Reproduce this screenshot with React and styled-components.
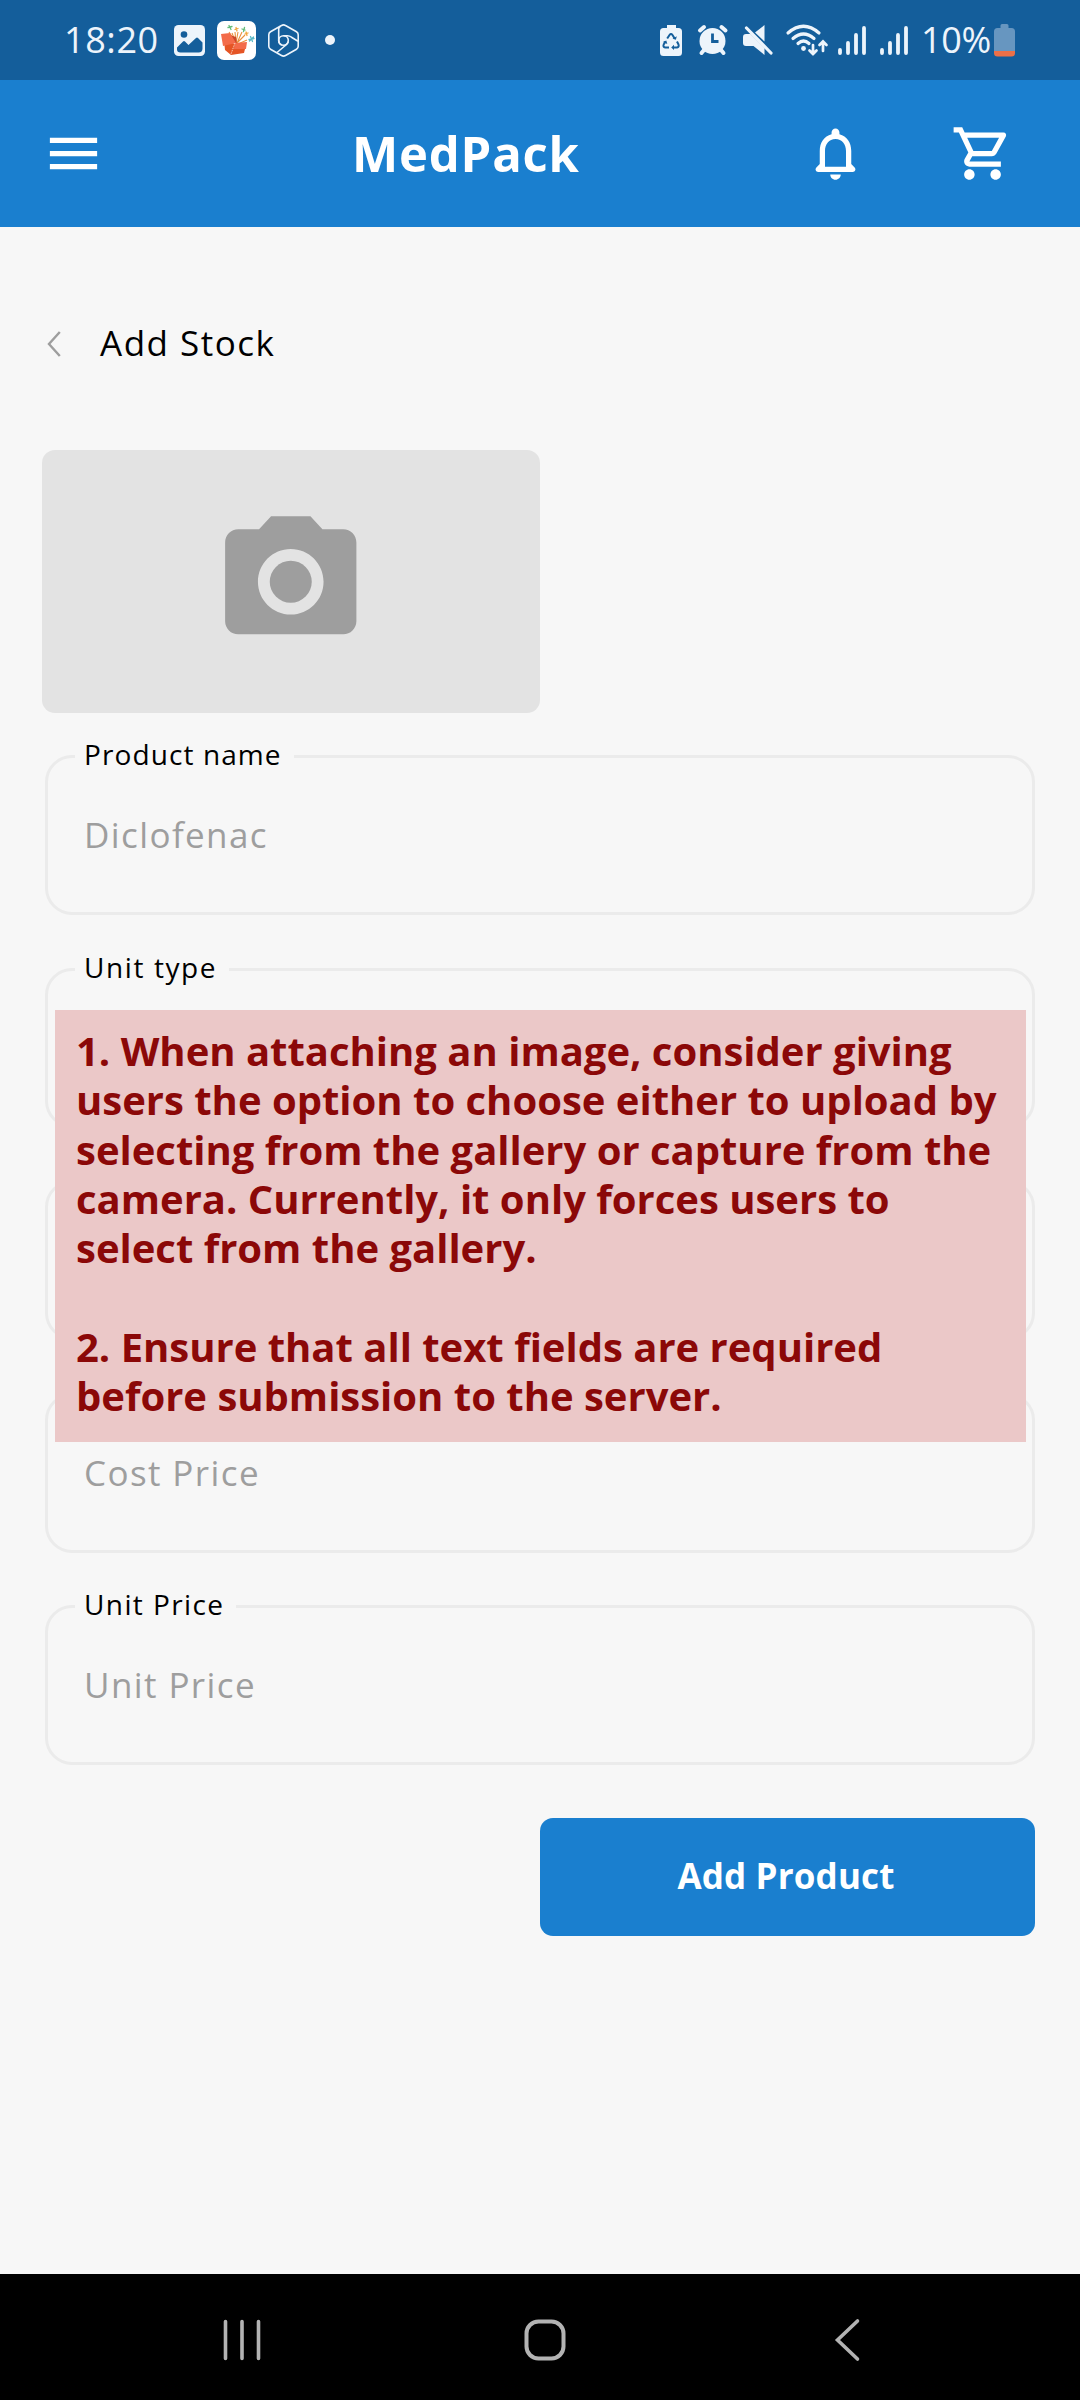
import React from "react";
import styled, { createGlobalStyle } from "styled-components";
import { MdMenu, MdOutlineShoppingCart, MdCameraAlt } from "react-icons/md";

const font = `"Open Sans", "Noto Sans", sans-serif`;

const Global = createGlobalStyle`
  * { box-sizing: border-box; }
  body { margin: 0; background: #f7f7f7; font-family: ${font}; }
  svg { display: block; flex: none; }
`;

const Screen = styled.div`
  position: relative;
  width: 1080px;
  height: 2400px;
  display: flex;
  flex-direction: column;
  background: #f7f7f7;
  overflow: hidden;
`;

const StatusBar = styled.header`
  height: 80px;
  flex: none;
  display: flex;
  justify-content: space-between;
  padding: 0 65px 0 64px;
  background: #145e9b;
  color: #edf4fb;
`;

const StatusGroup = styled.div`
  display: flex;
  align-items: center;
`;

const StatusText = styled.span`
  width: ${(p) => p.$width}px;
  font-size: 36px;
  line-height: 50px;
  letter-spacing: ${(p) => p.$spacing}px;
  white-space: nowrap;
  padding-bottom: 1px;
`;

const StatusIcon = styled.svg`
  margin-left: ${(p) => p.$gap || 0}px;
  overflow: visible;
`;

const AppBar = styled.nav`
  height: 147px;
  flex: none;
  display: flex;
  align-items: center;
  padding: 0 66px 0 42px;
  background: #1a7fcf;
  color: #fff;
`;

const Brand = styled.h1`
  margin: 0 0 0 247px;
  flex: 1;
  padding-bottom: 2px;
  font-size: 49px;
  font-weight: 700;
  line-height: 60px;
  letter-spacing: 0.8px;
`;

const Actions = styled.div`
  display: flex;
  gap: 84px;
`;

const Content = styled.main`
  flex: 1;
  display: flex;
  flex-direction: column;
  padding: 87px 45px 0 42px;
`;

const Heading = styled.div`
  height: 60px;
  display: flex;
  align-items: center;
  margin-bottom: 76px;
  padding-left: 5px;
`;

const PageTitle = styled.h2`
  margin: 0 0 2px 39px;
  font-size: 35px;
  font-weight: 400;
  line-height: 44px;
  letter-spacing: 1.5px;
  color: #000;
`;

const PhotoPicker = styled.div`
  width: 498px;
  height: 263px;
  flex: none;
  display: flex;
  align-items: center;
  justify-content: center;
  border-radius: 13px;
  background: #e3e3e3;
  color: #9e9e9e;
`;

const Form = styled.form`
  display: flex;
  flex-direction: column;
  gap: 38.5px;
  margin: 28px 0 0 3px;
`;

const Field = styled.fieldset`
  height: 174px;
  min-width: 0;
  margin: 0;
  padding: 0 27px;
  border: 3px solid #ebebeb;
  border-radius: 27px;
`;

const Label = styled.legend`
  height: 31px;
  padding: 0 12px 4px 9px;
  font-size: 28px;
  line-height: 27px;
  letter-spacing: ${(p) => p.$spacing || 1.5}px;
  color: #000;
`;

const Placeholder = styled.div`
  margin: 41px 0 0 9px;
  font-size: 35px;
  line-height: 44px;
  letter-spacing: 1.4px;
  color: #9e9e9e;
`;

const Submit = styled.button`
  align-self: flex-end;
  width: 495px;
  height: 118px;
  margin-top: 14px;
  padding: 0 3px 1px 0;
  border: 0;
  border-radius: 13px;
  background: #1a7fcf;
  color: #fff;
  font: 700 35px/44px ${font};
  letter-spacing: 0.15px;
`;

const Note = styled.aside`
  position: absolute;
  left: 55px;
  top: 1010px;
  width: 971px;
  height: 432px;
  padding: 16px 0 0 21px;
  background: #ebc8c8;
  color: #8b0808;
  font-size: 40px;
  font-weight: 700;
  line-height: 49.3px;
  white-space: pre;
`;

const NoteItem = styled.p`
  margin: 0 0 49.3px;
`;

const NavBar = styled.footer`
  height: 126px;
  flex: none;
  display: grid;
  grid-template-columns: repeat(3, 302.5px);
  place-items: center;
  padding: 6px 0 0 91px;
  background: #000;
`;

const Clock = () => (
  <StatusIcon $gap={16} width="30" height="30" viewBox="0 0 30 30">
    <circle cx="14.5" cy="16" r="13" fill="currentColor" />
    <g stroke="currentColor" strokeWidth="4" strokeLinecap="round">
      <path d="M2 5.5 6 2M23.500 2l4 3.500M6 25l-2.500 3M23 25l2.500 3" />
    </g>
    <path d="M14.500 8.500v8h6" fill="none" stroke="#145e9b" strokeWidth="2.800" />
  </StatusIcon>
);

const Recycle = () => (
  <StatusIcon width="22" height="33" viewBox="0 0 22 33">
    <path fill="currentColor" d="M7 1h9v3h2.500q3.500 0 3.500 3.500v21q0 3.500-3.500 3.500h-15Q0 32 0 28.500v-21Q0 4 3.500 4H7z" />
    <path
      d="M7.200 14.500 9.500 11q1.500-2 3 0l2 3.300M17 17.500l1.500 3q.8 2.500-1.500 3h-4M9 23.500H5.200q-2.500-.5-1.500-3l1.800-3"
      fill="none" stroke="#145e9b" strokeWidth="2"
    />
    <path d="m12.500 14.800 3.400 1 .9-3.500zM14 20.800l-2.800 2.700L14 26zM2.800 18l3.500-1.500 1 3.500z" fill="#145e9b" />
  </StatusIcon>
);

const Muted = () => (
  <StatusIcon $gap={15} width="30" height="30" viewBox="0 0 30 30">
    <path fill="currentColor" d="M0 12q0-3 3-3h4.500L21.500 23v7L10.500 21H3q-3 0-3-3zM12 7.500 21.500 0v16.500z" />
    <path d="m3.500 3 24.500 25" stroke="currentColor" strokeWidth="3.200" strokeLinecap="round" />
  </StatusIcon>
);

const Wifi = () => (
  <StatusIcon $gap={13} width="42" height="32" viewBox="0 0 42 32">
    <g fill="none" stroke="currentColor" strokeWidth="3.200" strokeLinecap="round">
      <path d="M2 9Q17.500-4.500 33 9M7 14.500q10.500-9 21 0M12 19.500q5.500-5 11 0" />
      <path d="M27 21v9m-3.500-3.500L27 30l3.500-3.500M37 27v-9m-3.500 3L37 17.500l3.500 3.500" strokeWidth="2.700" />
    </g>
    <circle cx="17.500" cy="24.500" r="2.400" fill="currentColor" />
  </StatusIcon>
);

const Signal = ({ gap }) => (
  <StatusIcon $gap={gap} width="28" height="30" viewBox="0 0 28 30">
    <path
      d="M2 25v3M10 18v10M18 10v18M26 3v25"
      stroke="currentColor" strokeWidth="3.800" strokeLinecap="round"
    />
  </StatusIcon>
);

const Battery = () => (
  <StatusIcon width="21" height="33" viewBox="0 0 21 33">
    <path fill="#6796c0" d="M6.500 1.500q0-1.500 1.500-1.500h5q1.500 0 1.500 1.500V4h3Q21 4 21 7.500V27H0V7.500Q0 4 3.500 4h3z" />
    <path fill="#ec7048" d="M0 27h21v2q0 3.500-3.500 3.500h-14Q0 32.500 0 29z" />
  </StatusIcon>
);

const Picture = () => (
  <StatusIcon width="31" height="31" viewBox="0 0 31 31">
    <rect width="31" height="31" rx="4.500" fill="currentColor" />
    <circle cx="10" cy="9.500" r="3.300" fill="#145e9b" />
    <path d="m3 22.500 6-6q1-1 2 0l3.500 3.500 7.500-7q1-1 2 0l4.500 4.500v6q0 4-4 4h-18q-3.500 0-3.500-3z" fill="#145e9b" />
  </StatusIcon>
);

const Confetti = () => (
  <StatusIcon $gap={12} width="39" height="39" viewBox="0 0 39 39">
    <rect width="39" height="39" rx="7" fill="#fff" />
    <g stroke="#e9913d" strokeWidth="1.100">
      <path d="M19 22 12 11M19 22l-4-10M19 22l-1-11M19 22l2-11M20 22l5-11M20 22l8-8M21 23l9-4" />
    </g>
    <path d="m7 19 11 4 11 1-2 8-13 2-6-5z" fill="#e55525" />
    <path d="m9 13 10 3 1 7-7-2z" fill="#c9472a" />
    <path d="m4 13 9-1 6 10-13 3zM18 22l12-1-1 7-12 0z" fill="#f36b49" />
    <path d="m18 22-4 11" stroke="#fbd8c7" strokeWidth=".9" strokeDasharray="1.500 1" />
    <g strokeWidth="1.300" strokeLinecap="round">
      <path d="M11 6.500l4-1M12 4.500l2 4M25 8l3 1M27.500 6.500l-1 4" stroke="#62bb78" />
      <path d="M18 8.500l3-1M19 6.500l1 3.500M28 13l3-1M29 11l1 3.500" stroke="#f0a53c" />
      <path d="M32 18.500l5-1M33.500 15.500l2 5M32.500 20l4-4" stroke="#5bb9c7" />
    </g>
  </StatusIcon>
);

const Hexagon = () => (
  <StatusIcon $gap={12} width="31" height="33" viewBox="0 0 31 33">
    <g fill="none" stroke="currentColor" strokeWidth="1.600" strokeLinejoin="round">
      <path d="M13.500 1.500q2-1.200 4 0l11 6.200q1.700 1 1.700 3v11.600q0 2-1.700 3l-11 6.200q-2 1.200-4 0l-11-6.200q-1.700-1-1.700-3V10.700q0-2 1.700-3z" />
      <circle cx="15.500" cy="16.500" r="4.800" />
      <path d="M10.700 16.500V5q0-1.500 1.500-2.500M15.500 11.700h4q2 0 4 1.500l6.500 4M20.300 17.500q-.8 2.500-3 4L9 28.500M10.700 16.500q0 3 3 4.500" />
    </g>
  </StatusIcon>
);

const Bell = () => (
  <svg width="63" height="63" viewBox="0 0 24 24" fill="currentColor">
    <path d="M19.290 17.290 18 16v-5c0-3.070-1.640-5.640-4.500-6.320V4c0-.83-.67-1.500-1.500-1.500s-1.500.67-1.500 1.500v.68C7.630 5.360 6 7.920 6 11v5l-1.290 1.290c-.63.63-.19 1.710.7 1.710h13.170c.9 0 1.340-1.080.71-1.710zM16 17H8v-6c0-2.480 1.510-4.500 4-4.500s4 2.020 4 4.500v6zm-4 5c1.100 0 2-.9 2-2h-4c0 1.100.89 2 2 2z" />
  </svg>
);

const fields = [
  { label: "Product name", spacing: 1.1, placeholder: "Diclofenac" },
  { label: "Unit type", spacing: 1.6 },
  {},
  { placeholder: "Cost Price" },
  { label: "Unit Price", spacing: 1.4, placeholder: "Unit Price" },
];

export default function App() {
  return (
    <Screen>
      <Global />
      <StatusBar>
        <StatusGroup>
          <StatusText $width={110} $spacing={0.6}>18:20</StatusText>
          <Picture />
          <Confetti />
          <Hexagon />
          <StatusIcon $gap={26} width="10" height="10" viewBox="0 0 10 10">
            <circle cx="5" cy="5" r="5" fill="currentColor" />
          </StatusIcon>
        </StatusGroup>
        <StatusGroup>
          <Recycle />
          <Clock />
          <Muted />
          <Wifi />
          <Signal gap={10} />
          <Signal gap={14} />
          <StatusIcon width="13" height="1" />
          <StatusText $width={73} $spacing={-0.3}>10%</StatusText>
          <Battery />
        </StatusGroup>
      </StatusBar>

      <AppBar>
        <MdMenu size={63} />
        <Brand>MedPack</Brand>
        <Actions>
          <Bell />
          <MdOutlineShoppingCart size={63} />
        </Actions>
      </AppBar>

      <Content>
        <Heading>
          <svg width="14" height="26" viewBox="0 0 14 26" fill="none" stroke="#9e9e9e" strokeWidth="2.400">
            <path d="M12.800 1 2 13l10.800 12" />
          </svg>
          <PageTitle>Add Stock</PageTitle>
        </Heading>
        <PhotoPicker>
          <MdCameraAlt size={157.5} />
        </PhotoPicker>
        <Form>
          {fields.map((f, i) => (
            <Field key={i}>
              <Label $spacing={f.spacing}>{f.label}</Label>
              {f.placeholder && <Placeholder>{f.placeholder}</Placeholder>}
            </Field>
          ))}
          <Submit type="button">Add Product</Submit>
        </Form>
      </Content>

      <Note>
        <NoteItem>{`1. When attaching an image, consider giving
users the option to choose either to upload by
selecting from the gallery or capture from the
camera. Currently, it only forces users to
select from the gallery.`}</NoteItem>
        <NoteItem>{`2. Ensure that all text fields are required
before submission to the server.`}</NoteItem>
      </Note>

      <NavBar>
        <svg width="40" height="44" viewBox="0 0 40 44" stroke="#b3b3b3" strokeWidth="3.600" strokeLinecap="round">
          <path d="M3.500 3.500v37M20 3.500v37M36.500 3.500v37" />
        </svg>
        <svg width="44" height="44" viewBox="0 0 44 44" fill="none" stroke="#b3b3b3" strokeWidth="4">
          <rect x="3.500" y="3.500" width="37" height="37" rx="12" />
        </svg>
        <svg width="28" height="44" viewBox="0 0 28 44" fill="none" stroke="#b3b3b3" strokeWidth="3.600" strokeLinecap="round">
          <path d="M24.500 3 4.500 22l20 19" />
        </svg>
      </NavBar>
    </Screen>
  );
}
